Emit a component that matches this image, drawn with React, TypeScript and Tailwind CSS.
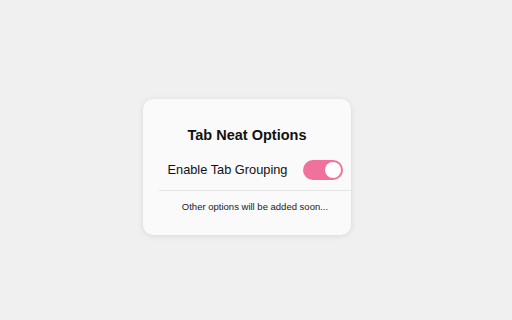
import React, { useState } from "react";

export default function App() {
  const [grouping, setGrouping] = useState(true);

  return (
    <div className="w-[512px] h-[320px] bg-[#f0f0f0] pt-[99px] pl-[143px] font-['Liberation_Sans',Arial,sans-serif] text-[#111]">
      <div className="w-[208px] h-[136px] rounded-[10px] bg-[#fafafa] shadow-[0_1px_6px_rgba(0,0,0,0.1)] p-4 overflow-hidden">
        <h2 className="mt-3 text-center text-[14.5px] font-bold leading-[16px] text-[#111]">
          Tab Neat Options
        </h2>
        <div className="w-[192px]">
          <div className="mt-[17px] flex items-center justify-center gap-[15px] h-5">
            <span className="text-[12.8px] leading-[16px]">Enable Tab Grouping</span>
            <button
              onClick={() => setGrouping(!grouping)}
              className={
                grouping
                  ? "relative w-10 h-5 rounded-full bg-[#f0719b]"
                  : "relative w-10 h-5 rounded-full bg-[#cccccc]"
              }
            >
              <span
                className={
                  grouping
                    ? "absolute top-[2px] left-[22px] w-4 h-4 rounded-full bg-white"
                    : "absolute top-[2px] left-[2px] w-4 h-4 rounded-full bg-white"
                }
              />
            </button>
          </div>
          <div className="mt-[10px] h-px bg-[#e4e4e4]" />
          <p className="mt-[10px] text-center text-[9.5px] leading-[11px] text-[#222]">
            Other options will be added soon...
          </p>
        </div>
      </div>
    </div>
  );
}
